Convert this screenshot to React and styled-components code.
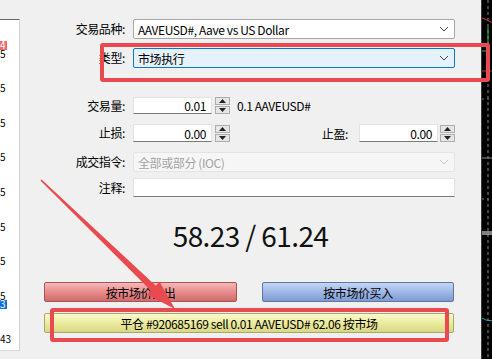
import styled, { createGlobalStyle } from "styled-components";

const GlobalStyles = createGlobalStyle`
  html, body {
    margin: 0;
    padding: 0;
  }
  body {
    background: #f0f0f0;
    font-family: "Noto Sans CJK SC", "Noto Sans", sans-serif;
    letter-spacing: -0.4px;
    color: #000;
  }
`;

const Page = styled.div`
  position: relative;
  width: 492px;
  height: 359px;
  display: flex;
  overflow: hidden;
  background: #f0f0f0;
`;

const TickList = styled.div`
  width: 20px;
  height: 332px;
  margin-top: 19px;
  box-sizing: border-box;
  padding-top: 21px;
  background: #fff;
  border-top: 1px solid #6b6b6b;
  border-right: 1px solid #d2d2d2;
  border-bottom: 1px solid #dadada;
  overflow: hidden;
  font-size: 10px;
  letter-spacing: 0;
`;

const TickRow = styled.div`
  height: 34.6px;
`;

const TickLine = styled.div`
  height: 8.6px;
  line-height: 8.6px;
  display: flex;
`;

const Tick = styled.span`
  padding-right: 1px;
  background: ${({ $tone }) =>
    $tone === "red" ? "#f06a6a" : $tone === "blue" ? "#0a6fdc" : "transparent"};
  color: ${({ $tone }) => ($tone ? "#fff" : "#000")};
`;

const Main = styled.div`
  flex: 1;
  display: flex;
  flex-direction: column;
  padding-top: 19px;
`;

const Row = styled.div`
  display: flex;
  align-items: center;
  height: ${({ $h }) => $h}px;
  margin-top: ${({ $mt }) => $mt || 0}px;
`;

const Label = styled.div`
  width: 105px;
  margin-right: 8px;
  text-align: right;
  font-size: 12px;
  line-height: 16px;
  white-space: nowrap;
`;

const Select = styled.div`
  width: 322px;
  height: 100%;
  box-sizing: border-box;
  display: flex;
  align-items: center;
  justify-content: space-between;
  padding: 0 5px 0 4px;
  border: 1px solid ${({ $active, $disabled }) =>
    $active ? "#0078d7" : $disabled ? "#e4e4e4" : "#a6a6a6"};
  border-radius: 2px;
  background: ${({ $active, $disabled }) =>
    $active ? "#e5f1fb" : $disabled ? "#f6f6f6" : "#fff"};
  color: ${({ $disabled }) => ($disabled ? "#a3a3a3" : "#000")};
  font-size: 12px;
`;

const Chevron = ({ color = "#444" }) => (
  <svg width="10" height="6" viewBox="0 0 10 6">
    <polyline points="1,1 5,5 9,1" fill="none" stroke={color} strokeWidth="1" />
  </svg>
);

const NumInput = styled.div`
  width: ${({ $w }) => $w}px;
  height: 100%;
  box-sizing: border-box;
  display: flex;
  align-items: center;
  justify-content: flex-end;
  padding-right: 5px;
  background: #fff;
  border: 1px solid #e3e3e3;
  border-bottom: 1px solid #7a7a7a;
  font-size: 12px;
`;

const Spinner = styled.div`
  width: 15px;
  height: 17px;
  margin-left: ${({ $ml }) => $ml}px;
  display: flex;
  flex-direction: column;
  gap: 1px;
`;

const SpinButton = styled.div`
  flex: 1;
  display: flex;
  align-items: center;
  justify-content: center;
  background: #e6e6e6;
  border: 1px solid #adadad;
`;

const Triangle = ({ up }) => (
  <svg width="7" height="4" viewBox="0 0 7 4">
    <polygon points={up ? "0,4 3.5,0 7,4" : "0,0 3.5,4 7,0"} fill="#222" />
  </svg>
);

const Spin = ({ ml }) => (
  <Spinner $ml={ml}>
    <SpinButton>
      <Triangle up />
    </SpinButton>
    <SpinButton>
      <Triangle />
    </SpinButton>
  </Spinner>
);

const Hint = styled.span`
  margin-left: 7px;
  font-size: 12px;
`;

const Spacer = styled.div`
  flex: 1;
`;

const TpLabel = styled.span`
  font-size: 12px;
  margin-right: 11px;
`;

const Controls = styled.div`
  width: 322px;
  height: 100%;
  display: flex;
  align-items: center;
`;

const Price = styled.div`
  margin-top: 18px;
  height: 40px;
  line-height: 40px;
  text-align: center;
  font-size: 28px;
  letter-spacing: -0.6px;
  color: #111;
`;

const ButtonRow = styled.div`
  display: flex;
  gap: 25px;
  margin-top: ${({ $mt }) => $mt}px;
  padding-left: 24px;
  width: 410px;
`;

const palettes = {
  sell: ["#f7b8b8", "#e88c8c", "#cf6a6a", "#a85454"],
  buy: ["#c4d6f6", "#9fb8e6", "#7d9ad2", "#5f76a6"],
  close: ["#f9f9cc", "#ecec9f", "#d7d786", "#a8a86a"],
};

const TradeButton = styled.div`
  flex: ${({ $w }) => ($w ? `0 0 ${$w}px` : 1)};
  height: 20px;
  box-sizing: border-box;
  display: flex;
  align-items: center;
  justify-content: center;
  border: 1px solid ${({ $kind }) => palettes[$kind][3]};
  border-radius: 2px;
  background: linear-gradient(
    ${({ $kind }) => palettes[$kind][0]},
    ${({ $kind }) => palettes[$kind][1]} 50%,
    ${({ $kind }) => palettes[$kind][2]}
  );
  font-size: 12px;
  white-space: nowrap;
`;

const Chart = styled.div`
  width: 11px;
  background: #000;
  border-left: 1px solid #3a3a3a;
  box-sizing: border-box;
`;

const Highlight = styled.div`
  position: absolute;
  left: ${({ $x }) => $x}px;
  top: ${({ $y }) => $y}px;
  width: ${({ $w }) => $w}px;
  height: ${({ $h }) => $h}px;
  box-sizing: border-box;
  border: 4px solid #e84a4f;
  border-radius: 3px;
  pointer-events: none;
`;

const ArrowLayer = styled.svg`
  position: absolute;
  left: 0;
  top: 0;
  pointer-events: none;
`;

const ticks = [
  [["4", "red"], ["5"]],
  [[""], ["5"]],
  [[""], ["5"]],
  [[""], ["5"]],
  [[""], ["5"]],
  [[""], ["5"]],
  [[""], ["5"]],
  [[""], ["5"], ["3", "blue"]],
  [[""], [""], ["43"]],
];

export default function App() {
  return (
    <>
      <GlobalStyles />
      <Page>
        <TickList>
          {ticks.map((lines, i) => (
            <TickRow key={i}>
              {lines.map(([t, tone], j) => (
                <TickLine key={j}>
                  {t && <Tick $tone={tone}>{t}</Tick>}
                </TickLine>
              ))}
            </TickRow>
          ))}
        </TickList>

        <Main>
          <Row $h={20}>
            <Label>交易品种:</Label>
            <Select>
              <span>AAVEUSD#, Aave vs US Dollar</span>
              <Chevron />
            </Select>
          </Row>
          <Row $h={20} $mt={9}>
            <Label>类型:</Label>
            <Select $active>
              <span>市场执行</span>
              <Chevron />
            </Select>
          </Row>
          <Row $h={17} $mt={29}>
            <Label>交易量:</Label>
            <Controls>
              <NumInput $w={79}>0.01</NumInput>
              <Spin ml={3} />
              <Hint>0.1 AAVEUSD#</Hint>
            </Controls>
          </Row>
          <Row $h={18} $mt={10}>
            <Label>止损:</Label>
            <Controls>
              <NumInput $w={79}>0.00</NumInput>
              <Spin ml={3} />
              <Spacer />
              <TpLabel>止盈:</TpLabel>
              <NumInput $w={79}>0.00</NumInput>
              <Spin ml={2} />
            </Controls>
          </Row>
          <Row $h={20} $mt={10}>
            <Label>成交指令:</Label>
            <Select $disabled>
              <span>全部或部分 (IOC)</span>
              <Chevron color="#c4c4c4" />
            </Select>
          </Row>
          <Row $h={19} $mt={6}>
            <Label>注释:</Label>
            <NumInput $w={322} />
          </Row>

          <Price>58.23 / 61.24</Price>

          <ButtonRow $mt={27}>
            <TradeButton $kind="sell" $w={193}>按市场价卖出</TradeButton>
            <TradeButton $kind="buy">按市场价买入</TradeButton>
          </ButtonRow>
          <ButtonRow $mt={11}>
            <TradeButton $kind="close">
              平仓 #920685169 sell 0.01 AAVEUSD# 62.06 按市场
            </TradeButton>
          </ButtonRow>
        </Main>

        <Chart>
          <svg width="11" height="359" viewBox="0 0 11 359">
            <line x1="6" y1="0" x2="6" y2="359" stroke="#8a8a8a" strokeDasharray="3 3" />
            <polyline points="0,18 5,20 11,23" fill="none" stroke="#d03030" />
            <line x1="6" y1="27" x2="6" y2="46" stroke="#2fbf3f" />
            <line x1="0" y1="51" x2="8" y2="51" stroke="#2fbf3f" />
            <line x1="0" y1="71" x2="11" y2="71" stroke="#d03030" />
            <line x1="0" y1="99" x2="11" y2="99" stroke="#777" strokeDasharray="2 3" />
            <line x1="0" y1="158" x2="11" y2="158" stroke="#8a8a8a" />
            <line x1="0" y1="199" x2="11" y2="199" stroke="#777" strokeDasharray="2 3" />
            <line x1="0" y1="232" x2="11" y2="232" stroke="#fff" />
            <line x1="0" y1="234" x2="11" y2="234" stroke="#fff" />
            <polyline points="0,318 4,320 11,321" fill="none" stroke="#3aa6a6" />
          </svg>
        </Chart>

        <Highlight $x={100} $y={43} $w={390} $h={39} />
        <Highlight $x={50} $y={308} $w={399} $h={34} />

        <ArrowLayer width="492" height="359" viewBox="0 0 492 359">
          <polygon
            points="40.4,180.6 151,290.8 147.2,294.8 175,309 159.6,281.8 155.8,285.8 41.6,179.4"
            fill="#e84a4f"
          />
        </ArrowLayer>
      </Page>
    </>
  );
}
